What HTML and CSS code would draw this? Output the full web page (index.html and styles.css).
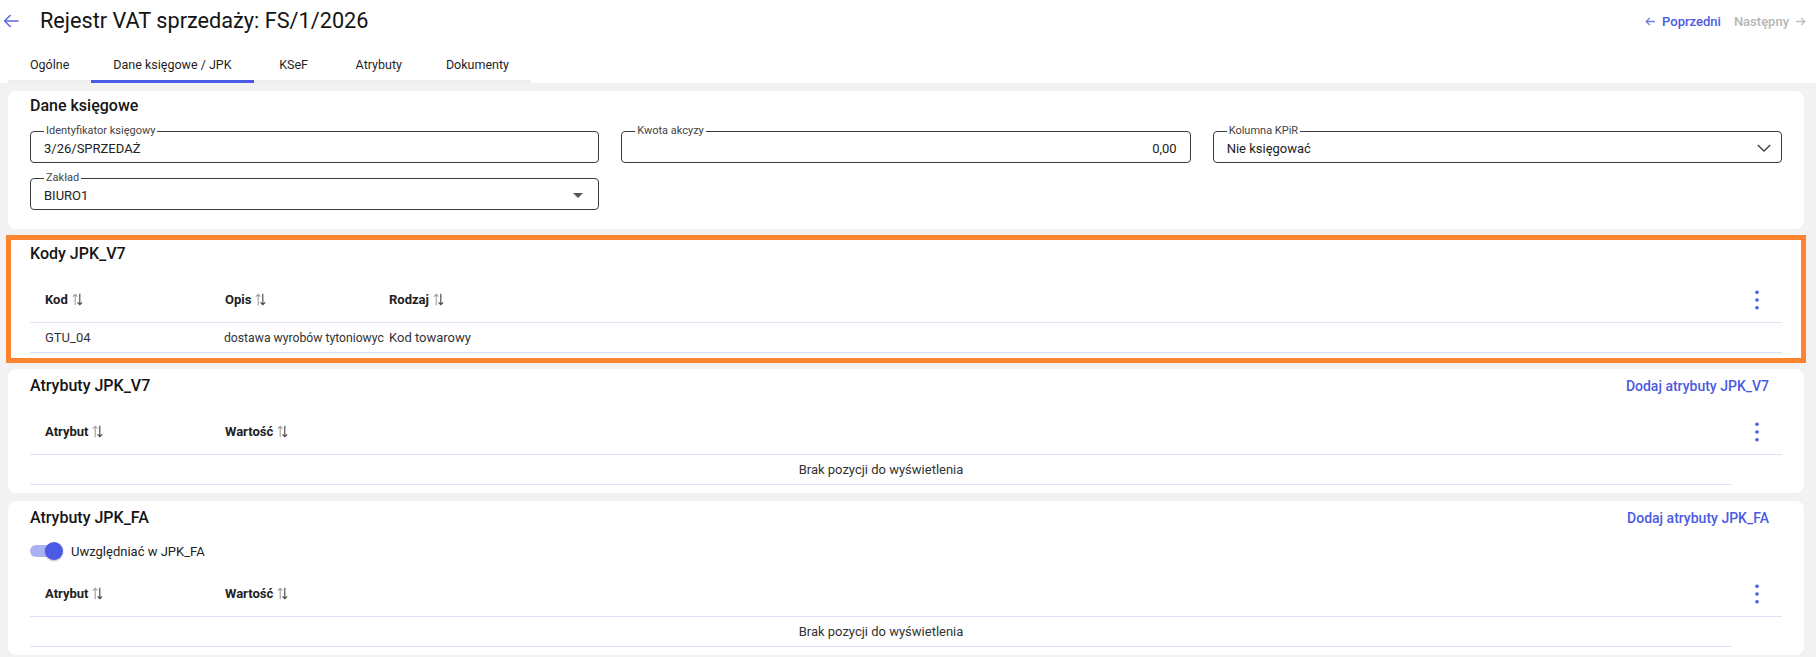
FILE: index.html
```html
<!DOCTYPE html>
<html lang="pl">
<head>
<meta charset="utf-8">
<title>Rejestr VAT sprzedaży</title>
<link rel="stylesheet" href="styles.css">
</head>
<body>
<svg class="defs" width="0" height="0" aria-hidden="true">
  <symbol id="sort" viewBox="0 0 11 13">
    <path d="M3.2 12.3V1.3M0.9 3.7L3.2 1.3 5.5 3.7" fill="none" stroke="#a3a3a3" stroke-width="1.15"/>
    <path d="M7.8 0.7v11M5.5 9.3l2.3 2.4 2.3-2.4" fill="none" stroke="#4a4a4a" stroke-width="1.15"/>
  </symbol>
  <symbol id="kebab" viewBox="0 0 4 20">
    <circle cx="2" cy="2.2" r="1.8" fill="#4b5ae4"/>
    <circle cx="2" cy="10" r="1.8" fill="#4b5ae4"/>
    <circle cx="2" cy="17.8" r="1.8" fill="#4b5ae4"/>
  </symbol>
</svg>

<header class="page-header">
  <div class="topbar">
    <svg class="back" width="16" height="14" viewBox="0 0 16 14"><path d="M15.5 7H1.6M7.6 1L1.6 7l6 6" fill="none" stroke="#5c68e2" stroke-width="1.5"/></svg>
    <h1 class="title">Rejestr VAT sprzedaży: FS/1/2026</h1>
    <nav class="pager">
      <span class="pager-prev">
        <svg width="10" height="9" viewBox="0 0 10 9"><path d="M9.8 4.5H1.2M4.8 0.9L1.2 4.5l3.6 3.6" fill="none" stroke="#6f7be6" stroke-width="1.3"/></svg>
        Poprzedni
      </span>
      <span class="pager-next">
        Następny
        <svg width="10" height="9" viewBox="0 0 10 9"><path d="M0.2 4.5h8.6M5.2 0.9l3.6 3.6-3.6 3.6" fill="none" stroke="#bdbdbd" stroke-width="1.3"/></svg>
      </span>
    </nav>
  </div>
  <div class="tabs">
    <div class="tab">Ogólne</div>
    <div class="tab active">Dane księgowe / JPK</div>
    <div class="tab">KSeF</div>
    <div class="tab">Atrybuty</div>
    <div class="tab">Dokumenty</div>
  </div>
</header>

<main class="content">
  <section class="card card-fields">
    <div class="card-head"><h2 class="card-title">Dane księgowe</h2></div>
    <div class="fields">
      <fieldset class="field">
        <legend>Identyfikator księgowy</legend>
        <div class="field-row"><span class="value">3/26/SPRZEDAŻ</span></div>
      </fieldset>
      <fieldset class="field">
        <legend>Kwota akcyzy</legend>
        <div class="field-row field-right"><span class="value">0,00</span></div>
      </fieldset>
      <fieldset class="field">
        <legend>Kolumna KPiR</legend>
        <div class="field-row"><span class="value">Nie księgować</span>
          <svg class="chevron" width="16" height="10" viewBox="0 0 16 10"><path d="M1.8 2l6.2 6 6.2-6" fill="none" stroke="#3f3f3f" stroke-width="1.4"/></svg>
        </div>
      </fieldset>
      <fieldset class="field">
        <legend>Zakład</legend>
        <div class="field-row"><span class="value">BIURO1</span>
          <svg class="caret" width="10" height="5" viewBox="0 0 10 5"><path d="M0 0h10L5 5z" fill="#555"/></svg>
        </div>
      </fieldset>
    </div>
  </section>

  <section class="card card-highlight">
    <div class="card-head"><h2 class="card-title">Kody JPK_V7</h2></div>
    <div class="table">
      <div class="thead cols-3">
        <div class="th">Kod <svg class="sort"><use href="#sort"/></svg></div>
        <div class="th">Opis <svg class="sort"><use href="#sort"/></svg></div>
        <div class="th">Rodzaj <svg class="sort"><use href="#sort"/></svg></div>
        <div class="actions"><svg class="kebab"><use href="#kebab"/></svg></div>
      </div>
      <div class="trow cols-3">
        <div class="td">GTU_04</div>
        <div class="td td-narrow">dostawa wyrobów tytoniowyc</div>
        <div class="td">Kod towarowy</div>
        <div></div>
      </div>
    </div>
  </section>

  <section class="card">
    <div class="card-head">
      <h2 class="card-title">Atrybuty JPK_V7</h2>
      <span class="link">Dodaj atrybuty JPK_V7</span>
    </div>
    <div class="table">
      <div class="thead cols-2">
        <div class="th">Atrybut <svg class="sort"><use href="#sort"/></svg></div>
        <div class="th">Wartość <svg class="sort"><use href="#sort"/></svg></div>
        <div class="actions"><svg class="kebab"><use href="#kebab"/></svg></div>
      </div>
      <div class="empty">Brak pozycji do wyświetlenia</div>
    </div>
  </section>

  <section class="card">
    <div class="card-head">
      <h2 class="card-title">Atrybuty JPK_FA</h2>
      <span class="link">Dodaj atrybuty JPK_FA</span>
    </div>
    <div class="toggle-row">
      <span class="switch"><span class="knob"></span></span>
      <span>Uwzględniać w JPK_FA</span>
    </div>
    <div class="table table-after-toggle">
      <div class="thead cols-2">
        <div class="th">Atrybut <svg class="sort"><use href="#sort"/></svg></div>
        <div class="th">Wartość <svg class="sort"><use href="#sort"/></svg></div>
        <div class="actions"><svg class="kebab"><use href="#kebab"/></svg></div>
      </div>
      <div class="empty">Brak pozycji do wyświetlenia</div>
    </div>
  </section>
</main>
</body>
</html>
```

FILE: styles.css
```css
* { box-sizing: border-box; }

html, body {
  margin: 0;
  padding: 0;
}

body {
  width: 1816px;
  height: 657px;
  overflow: hidden;
  background: #f2f2f2;
  font-family: Roboto, "Noto Sans", "Liberation Sans", sans-serif;
  color: #222;
}

.defs {
  position: absolute;
  width: 0;
  height: 0;
  overflow: hidden;
}

/* ---------- header ---------- */
.page-header {
  background: #fff;
}

.topbar {
  height: 42px;
  display: flex;
  align-items: center;
  padding: 0 10px 0 3px;
}

.back {
  flex-shrink: 0;
  margin-right: 21px;
}

.title {
  margin: 0;
  font-size: 21.7px;
  line-height: 28px;
  font-weight: 400;
  color: #141414;
}

.pager {
  margin-left: auto;
  display: flex;
  align-items: center;
  font-size: 13px;
  font-weight: 500;
}

.pager-prev {
  display: flex;
  align-items: center;
  gap: 7px;
  color: #4b5ae4;
}

.pager-next {
  display: flex;
  align-items: center;
  gap: 7px;
  margin-left: 13px;
  color: #b5b5b5;
}

.tabs {
  display: flex;
  margin: 7px 0 0 8px;
}

.tab {
  height: 34px;
  line-height: 32px;
  min-width: 80px;
  padding: 0 22px;
  text-align: center;
  font-size: 12.5px;
  font-weight: 400;
  color: #1f1f1f;
  border-bottom: 3px solid #efefef;
}

.tab.active {
  border-bottom-color: #4b5ae4;
}

/* ---------- content ---------- */
.content {
  display: flex;
  flex-direction: column;
  gap: 8px;
  padding: 8px 12px 8px 8px;
}

.card {
  background: #fff;
  border-radius: 8px;
  padding: 7px 22px 8px;
}

.card-fields {
  padding-top: 5px;
  padding-bottom: 19px;
}

.card-highlight {
  border-radius: 0;
  outline: 5px solid #fe832f;
  outline-offset: -3px;
}

.card-head {
  display: flex;
  align-items: center;
  justify-content: space-between;
  height: 20px;
}

.card-title {
  margin: 0;
  font-size: 16px;
  line-height: 20px;
  font-weight: 500;
  color: #141414;
}

.link {
  margin-right: 13px;
  font-size: 14px;
  font-weight: 500;
  color: #4b5ae4;
}

/* ---------- outlined fields ---------- */
.fields {
  display: grid;
  grid-template-columns: repeat(3, 1fr);
  column-gap: 22px;
  row-gap: 9px;
  margin-top: 9px;
}

.field {
  margin: 0;
  min-width: 0;
  border: 1px solid #3b3b3b;
  border-radius: 4px;
  padding: 0 13px 3px;
}

.field legend {
  padding: 0 2px;
  font-size: 11px;
  line-height: 12px;
  color: #444;
}

.field-row {
  display: flex;
  align-items: center;
  justify-content: space-between;
  height: 22px;
}

.field-right {
  justify-content: flex-end;
}

.value {
  font-size: 13px;
  color: #222;
}

.chevron {
  margin-right: -4px;
}

.caret {
  margin-right: 2px;
}

/* ---------- tables ---------- */
.table {
  margin-top: 13px;
}

.table-after-toggle {
  margin-top: 0;
}

.thead,
.trow {
  display: grid;
  align-items: center;
  border-bottom: 1px solid #e2e0f4;
}

.thead { height: 46px; }
.trow { height: 30px; }

.cols-3 { grid-template-columns: 180px 164px 1fr 50px; }
.cols-2 { grid-template-columns: 180px 1fr 50px; }

.th {
  display: flex;
  align-items: center;
  gap: 4px;
  padding-left: 15px;
  font-size: 13px;
  font-weight: 700;
  color: #222;
}

.sort {
  width: 11px;
  height: 13px;
}

.td {
  padding-left: 15px;
  font-size: 13px;
  color: #333;
  white-space: nowrap;
}

.td-narrow {
  font-size: 12.2px;
  padding-left: 14px;
}

.actions {
  display: flex;
  justify-content: center;
}

.kebab {
  width: 4px;
  height: 20px;
}

.empty {
  margin-right: 50px;
  height: 30px;
  line-height: 29px;
  text-align: center;
  font-size: 13px;
  color: #333;
  border-bottom: 1px solid #e2e0f4;
}

/* ---------- toggle ---------- */
.toggle-row {
  display: flex;
  align-items: center;
  height: 40px;
  margin-top: 3px;
  font-size: 13px;
  color: #222;
}

.switch {
  display: flex;
  align-items: center;
  justify-content: flex-end;
  width: 30px;
  height: 12px;
  margin-right: 11px;
  border-radius: 6px;
  background: #a9b1f1;
}

.knob {
  flex-shrink: 0;
  width: 18px;
  height: 18px;
  margin-right: -3px;
  border-radius: 50%;
  background: #4b5ae4;
  box-shadow: 0 1px 2px rgba(0, 0, 0, 0.3);
}
```
